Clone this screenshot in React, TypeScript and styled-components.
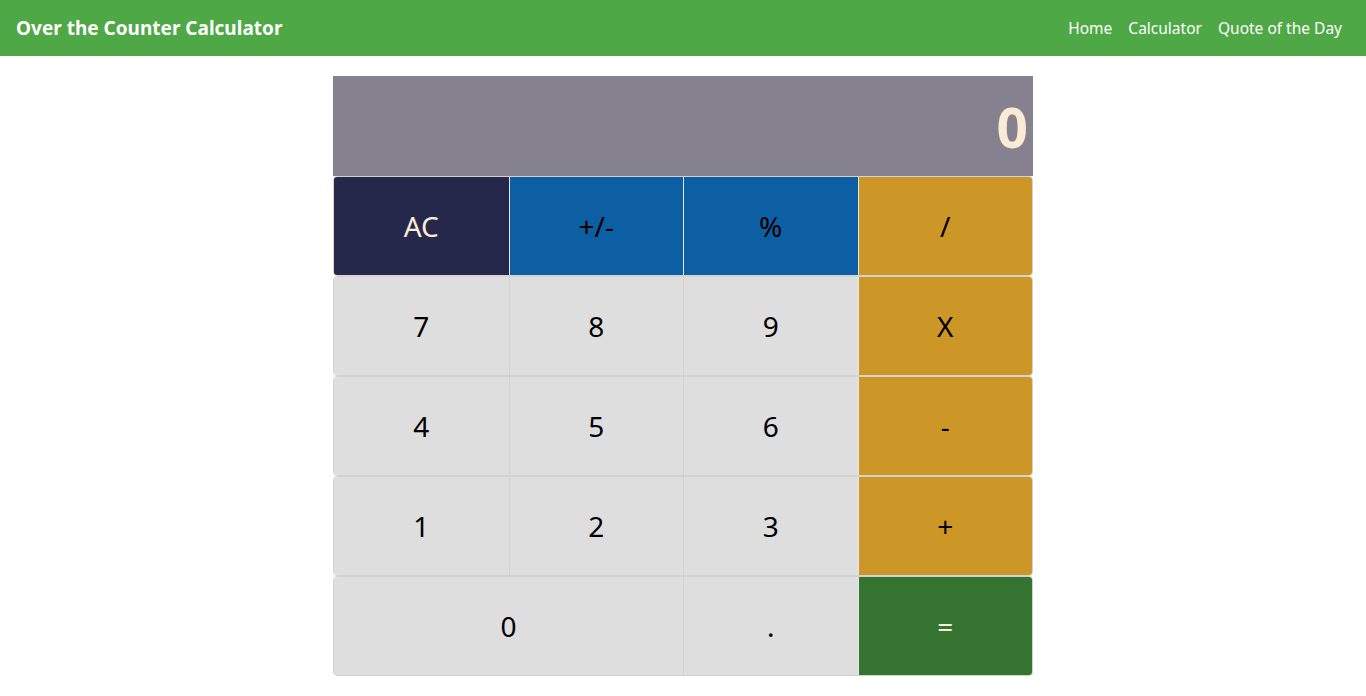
import styled, { createGlobalStyle } from "styled-components";

const GlobalStyle = createGlobalStyle`
    body {
        margin: 0;
        font-family: "Noto Sans", "Open Sans", sans-serif;
        background: #fff;
    }
`;

const NavBar = styled.nav`
    height: 56px;
    background: #4fa846;
    display: flex;
    align-items: center;
    justify-content: space-between;
    padding: 0 24px 0 16px;
    box-sizing: border-box;
`;

const Brand = styled.div`
    color: #fff;
    font-size: 19px;
    font-weight: 700;
`;

const Links = styled.div`
    display: flex;
    gap: 16px;
    a {
        color: #fff;
        font-size: 15.5px;
        text-decoration: none;
    }
`;

const Calculator = styled.div`
    width: 700px;
    margin: 20px auto 0;
`;

const Display = styled.div`
    height: 100px;
    background: #85818f;
    color: #faebd7;
    font-size: 55px;
    font-weight: 700;
    display: flex;
    align-items: center;
    justify-content: flex-end;
    padding-right: 5px;
    box-sizing: border-box;
`;

const Row = styled.div`
    display: grid;
    grid-template-columns: repeat(4, 1fr);
    height: 100px;
    border: 1px solid #d2d2d2;
    border-radius: 4px;
    overflow: hidden;
    box-sizing: border-box;
`;

const tones = {
    clear: { bg: "#25284a", fg: "#faebd7" },
    func: { bg: "#0d5fa3", fg: "#000" },
    op: { bg: "#cd9728", fg: "#000" },
    num: { bg: "#dedede", fg: "#000" },
    eq: { bg: "#357430", fg: "#faebd7" },
};

type Tone = keyof typeof tones;

const Key = styled.button<{ $tone: Tone; $span?: number }>`
    grid-column: span ${(p) => p.$span || 1};
    border: none;
    border-left: 1px solid ${(p) => (p.$tone === "num" ? "#d2d2d2" : "#e6e6e6")};
    &:first-child {
        border-left: none;
    }
    background: ${(p) => tones[p.$tone].bg};
    color: ${(p) => tones[p.$tone].fg};
    font-family: inherit;
    font-size: 28px;
    padding: 0;
    cursor: pointer;
`;

const rows: { label: string; tone: Tone; span?: number }[][] = [
    [
        { label: "AC", tone: "clear" },
        { label: "+/-", tone: "func" },
        { label: "%", tone: "func" },
        { label: "/", tone: "op" },
    ],
    [
        { label: "7", tone: "num" },
        { label: "8", tone: "num" },
        { label: "9", tone: "num" },
        { label: "X", tone: "op" },
    ],
    [
        { label: "4", tone: "num" },
        { label: "5", tone: "num" },
        { label: "6", tone: "num" },
        { label: "-", tone: "op" },
    ],
    [
        { label: "1", tone: "num" },
        { label: "2", tone: "num" },
        { label: "3", tone: "num" },
        { label: "+", tone: "op" },
    ],
    [
        { label: "0", tone: "num", span: 2 },
        { label: ".", tone: "num" },
        { label: "=", tone: "eq" },
    ],
];

export default function App() {
    return <>
        <GlobalStyle />
        <NavBar>
            <Brand>Over the Counter Calculator</Brand>
            <Links>
                <a href="#">Home</a>
                <a href="#">Calculator</a>
                <a href="#">Quote of the Day</a>
            </Links>
        </NavBar>
        <Calculator>
            <Display>0</Display>
            {rows.map((row, i) => (
                <Row key={i}>
                    {row.map((k) => (
                        <Key key={k.label} $tone={k.tone} $span={k.span}>{k.label}</Key>
                    ))}
                </Row>
            ))}
        </Calculator>
    </>
}
